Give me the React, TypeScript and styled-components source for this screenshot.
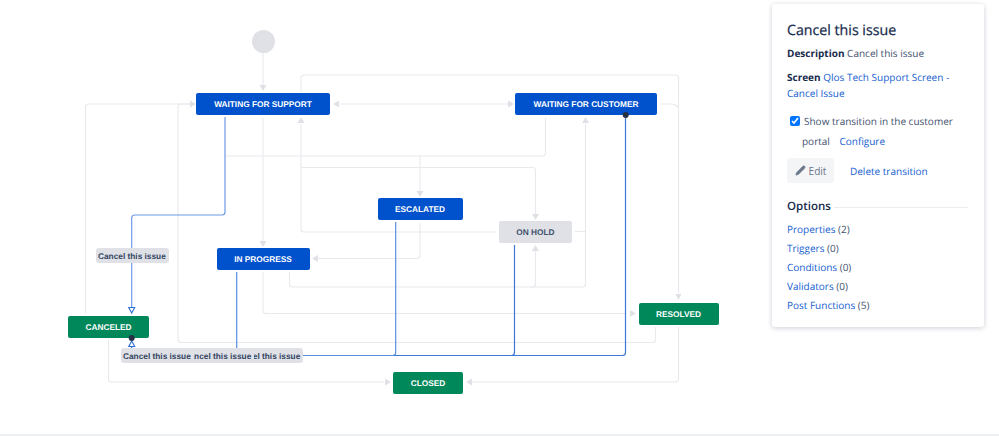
import React from "react";
import styled, { createGlobalStyle } from "styled-components";
import { Pencil } from "lucide-react";

const Global = createGlobalStyle`
  html, body { margin: 0; padding: 0; background: #fff; }
  body { font-family: "Open Sans", "Noto Sans", sans-serif; color: #42526e; overflow: hidden; text-rendering: geometricPrecision; }
  * { box-sizing: border-box; }
`;

const Page = styled.div`
  width: 999px;
  height: 436px;
  display: flex;
  flex-direction: column;
  overflow: hidden;
`;
const Main = styled.main`
  flex: 1;
  display: flex;
  align-items: flex-start;
`;
const Rule = styled.div`
  height: 2px;
  background: #eff0f2;
`;
const Canvas = styled.section`
  position: relative;
  width: 772px;
  height: 434px;
  flex: none;
`;
const Wires = styled.svg`
  position: absolute;
  inset: 0;
`;
const tones = {
  blue: "background:#0052cc;color:#fff;",
  green: "background:#00875a;color:#fff;",
  grey: "background:#dfe1e6;color:#42526e;",
};
const Node = styled.div<{ $x: number; $y: number; $w: number; $h: number; $tone: keyof typeof tones }>`
  position: absolute;
  left: ${(p) => p.$x}px;
  top: ${(p) => p.$y}px;
  width: ${(p) => p.$w}px;
  height: ${(p) => p.$h}px;
  display: flex;
  align-items: center;
  justify-content: center;
  border-radius: 2px;
  font: bold 8.3px "Liberation Sans", Arial, sans-serif;
  white-space: nowrap;
  ${(p) => tones[p.$tone]}
`;
const Start = styled.div`
  position: absolute;
  left: 251.5px;
  top: 29.5px;
  width: 23px;
  height: 23px;
  border-radius: 50%;
  background: #dfe1e6;
`;
const Tag = styled.div<{ $x: number; $y: number; $z: number }>`
  position: absolute;
  left: ${(p) => p.$x}px;
  top: ${(p) => p.$y}px;
  z-index: ${(p) => p.$z};
  width: 73px;
  height: 15px;
  padding-left: 2.5px;
  display: flex;
  align-items: center;
  border-radius: 3px;
  background: #dfe1e6;
  color: #344563;
  font: bold 8.3px "Liberation Sans", Arial, sans-serif;
  white-space: nowrap;
`;
const Panel = styled.aside`
  width: 212px;
  margin-top: 4px;
  padding: 17px 16px 12px 15px;
  border-radius: 3px;
  background: #fff;
  box-shadow: 0 1px 5px rgba(9, 30, 66, 0.22);
  font-size: 10px;
  line-height: 16px;
`;
const Title = styled.h2`
  margin: 0;
  font-size: 14.2px;
  line-height: 20px;
  font-weight: 400;
  color: #172b4d;
  -webkit-text-stroke: 0.25px #172b4d;
`;
const Para = styled.p<{ $gap: number }>`
  margin: ${(p) => p.$gap}px 0 0;
`;
const Strong = styled.b`
  color: #172b4d;
  font-weight: 700;
`;
const Link = styled.a`
  color: #1560d0;
`;
const Portal = styled.div`
  margin-top: 10px;
  padding-left: 15px;
  line-height: 20px;
`;
const Check = styled.input`
  width: 10px;
  height: 10px;
  margin: 0 4px 0 -12px;
  vertical-align: -1px;
`;
const Configure = styled(Link)`
  margin-left: 7px;
`;
const Actions = styled.div`
  margin-top: 7px;
  display: flex;
  align-items: center;
  gap: 16px;
`;
const EditBtn = styled.button`
  width: 47px;
  height: 25px;
  padding: 0;
  border: 0;
  border-radius: 3px;
  background: #f4f5f7;
  color: #6b778c;
  font: inherit;
  display: flex;
  align-items: center;
  justify-content: center;
  gap: 3px;
`;
const OptionsHead = styled.div`
  margin-top: 15px;
  display: flex;
  align-items: center;
  gap: 3px;
  font-size: 11.5px;
  line-height: 18px;
  font-weight: 600;
  color: #172b4d;
  &::after {
    content: "";
    flex: 1;
    height: 1px;
    background: #ebecf0;
  }
`;
const List = styled.ul`
  list-style: none;
  margin: 3.5px 0 0;
  padding: 0;
`;
const Item = styled.li`
  height: 19px;
  line-height: 19px;
`;

const corner = (pts: number[][], r = 3) => {
  let d = `M${pts[0][0]} ${pts[0][1]}`;
  for (let i = 1; i < pts.length; i++) {
    const [x, y] = pts[i];
    if (i === pts.length - 1) {
      d += `L${x} ${y}`;
      break;
    }
    const [px, py] = pts[i - 1];
    const [nx, ny] = pts[i + 1];
    const ax = x - Math.sign(x - px) * r;
    const ay = y - Math.sign(y - py) * r;
    const bx = x + Math.sign(nx - x) * r;
    const by = y + Math.sign(ny - y) * r;
    d += `L${ax} ${ay}Q${x} ${y} ${bx} ${by}`;
  }
  return d;
};

const greyEdges: number[][][] = [
  [[263, 52], [263, 88]],
  [[301, 92], [301, 75], [678.5, 75], [678.5, 293]],
  [[660, 104], [675, 104], [678.5, 108]],
  [[340, 104], [508, 104]],
  [[85.5, 313], [85.5, 104], [190, 104]],
  [[655.5, 327], [655.5, 342.5], [178, 342.5], [178, 104], [190, 104]],
  [[263, 118], [263, 241]],
  [[301, 124], [301, 232], [496, 232]],
  [[301, 167.5], [535.5, 167.5], [535.5, 214]],
  [[225, 156], [545.5, 156], [545.5, 118]],
  [[420, 156], [420, 192]],
  [[420, 223], [420, 258.5], [318, 258.5]],
  [[289.5, 272], [289.5, 287], [585.5, 287], [585.5, 124]],
  [[575, 231.5], [585.5, 231.5]],
  [[530, 287], [535.5, 287], [535.5, 251]],
  [[263, 272], [263, 313.5], [626, 313.5]],
  [[678.5, 327], [678.5, 382], [472, 382]],
  [[108.5, 340], [108.5, 382], [384, 382]],
];
const greyHeads = [
  "263,91 259.5,85 266.5,85",
  "678.5,300 675.5,294 681.5,294",
  "196,104 190,100.5 190,107.5",
  "333,104 339,100.5 339,107.5",
  "514,104 508,100.5 508,107.5",
  "263,247 259.5,241 266.5,241",
  "301,117 297.5,123 304.5,123",
  "535.5,220 532,214 539,214",
  "420,197 416.5,191 423.5,191",
  "312,258.5 318,255 318,262",
  "585.5,117 582,123 589,123",
  "535.5,245 532,251 539,251",
  "636,313.5 630,310 630,317",
  "466,382 472,378.5 472,385.5",
  "391,382 385,378.5 385,385.5",
];
const blueEdges: { pts: number[][]; color: string }[] = [
  { pts: [[225, 117], [225, 215], [131.7, 215], [131.7, 308]], color: "#6f9be6" },
  { pts: [[625.5, 118], [625.5, 355.5], [131.7, 355.5], [131.7, 347]], color: "#3f78d8" },
  { pts: [[514.5, 245], [514.5, 355.5], [300, 355.5]], color: "#3f78d8" },
  { pts: [[395.7, 222], [395.7, 355.5], [300, 355.5]], color: "#5c8ee2" },
  { pts: [[236.7, 272], [236.7, 350]], color: "#5c8ee2" },
];

const App = () => (
  <Page>
    <Global />
    <Main>
      <Canvas>
        <Wires width="772" height="434" viewBox="0 0 772 434" fill="none">
          {greyEdges.map((e, i) => (
            <path key={i} d={corner(e)} stroke="#e8e9ed" strokeWidth="1.1" />
          ))}
          {greyHeads.map((p) => (
            <polygon key={p} points={p} fill="#dfe1e6" />
          ))}
          {blueEdges.map((e, i) => (
            <path key={i} d={corner(e.pts)} stroke={e.color} strokeWidth="1.2" />
          ))}
          <polygon points="131.7,313 128.7,307.5 134.7,307.5" fill="#fff" stroke="#2f6fd6" strokeWidth="1.1" />
          <polygon points="131.7,341 128.7,346.5 134.7,346.5" fill="#fff" stroke="#2f6fd6" strokeWidth="1.1" />
        </Wires>
        <Start />
        <Node $x={196} $y={93} $w={134} $h={22} $tone="blue">WAITING FOR SUPPORT</Node>
        <Node $x={515} $y={93} $w={142} $h={22} $tone="blue">WAITING FOR CUSTOMER</Node>
        <Node $x={377.5} $y={198} $w={85} $h={22} $tone="blue">ESCALATED</Node>
        <Node $x={499} $y={221} $w={73} $h={21.5} $tone="grey">ON HOLD</Node>
        <Node $x={216.5} $y={248} $w={93} $h={21.5} $tone="blue">IN PROGRESS</Node>
        <Node $x={68} $y={316} $w={81} $h={21.5} $tone="green">CANCELED</Node>
        <Node $x={638.5} $y={303} $w={80} $h={21.5} $tone="green">RESOLVED</Node>
        <Node $x={393} $y={372} $w={70} $h={21.5} $tone="green">CLOSED</Node>
        <Wires width="772" height="434" viewBox="0 0 772 434" fill="none">
          <circle cx="131.7" cy="338" r="3" fill="#253044" />
          <circle cx="625.7" cy="115" r="3" fill="#253044" />
        </Wires>
        <Tag $x={95.5} $y={248} $z={1}>Cancel this issue</Tag>
        <Tag $x={120.5} $y={348} $z={3}>Cancel this issue</Tag>
        <Tag $x={181} $y={348} $z={2}>Cancel this issue</Tag>
        <Tag $x={230} $y={348} $z={1}>Cancel this issue</Tag>
      </Canvas>
      <Panel>
        <Title>Cancel this issue</Title>
        <Para $gap={4}><Strong>Description</Strong> Cancel this issue</Para>
        <Para $gap={8}><Strong>Screen</Strong> <Link>Qlos Tech Support Screen - Cancel Issue</Link></Para>
        <Portal>
          <Check type="checkbox" defaultChecked />
          Show transition in the customer portal <Configure>Configure</Configure>
        </Portal>
        <Actions>
          <EditBtn><Pencil size={11} fill="#6b778c" strokeWidth={1.5} />Edit</EditBtn>
          <Link>Delete transition</Link>
        </Actions>
        <OptionsHead>Options</OptionsHead>
        <List>
          <Item><Link>Properties</Link> (2)</Item>
          <Item><Link>Triggers</Link> (0)</Item>
          <Item><Link>Conditions</Link> (0)</Item>
          <Item><Link>Validators</Link> (0)</Item>
          <Item><Link>Post Functions</Link> (5)</Item>
        </List>
      </Panel>
    </Main>
    <Rule />
  </Page>
);

export default App;
